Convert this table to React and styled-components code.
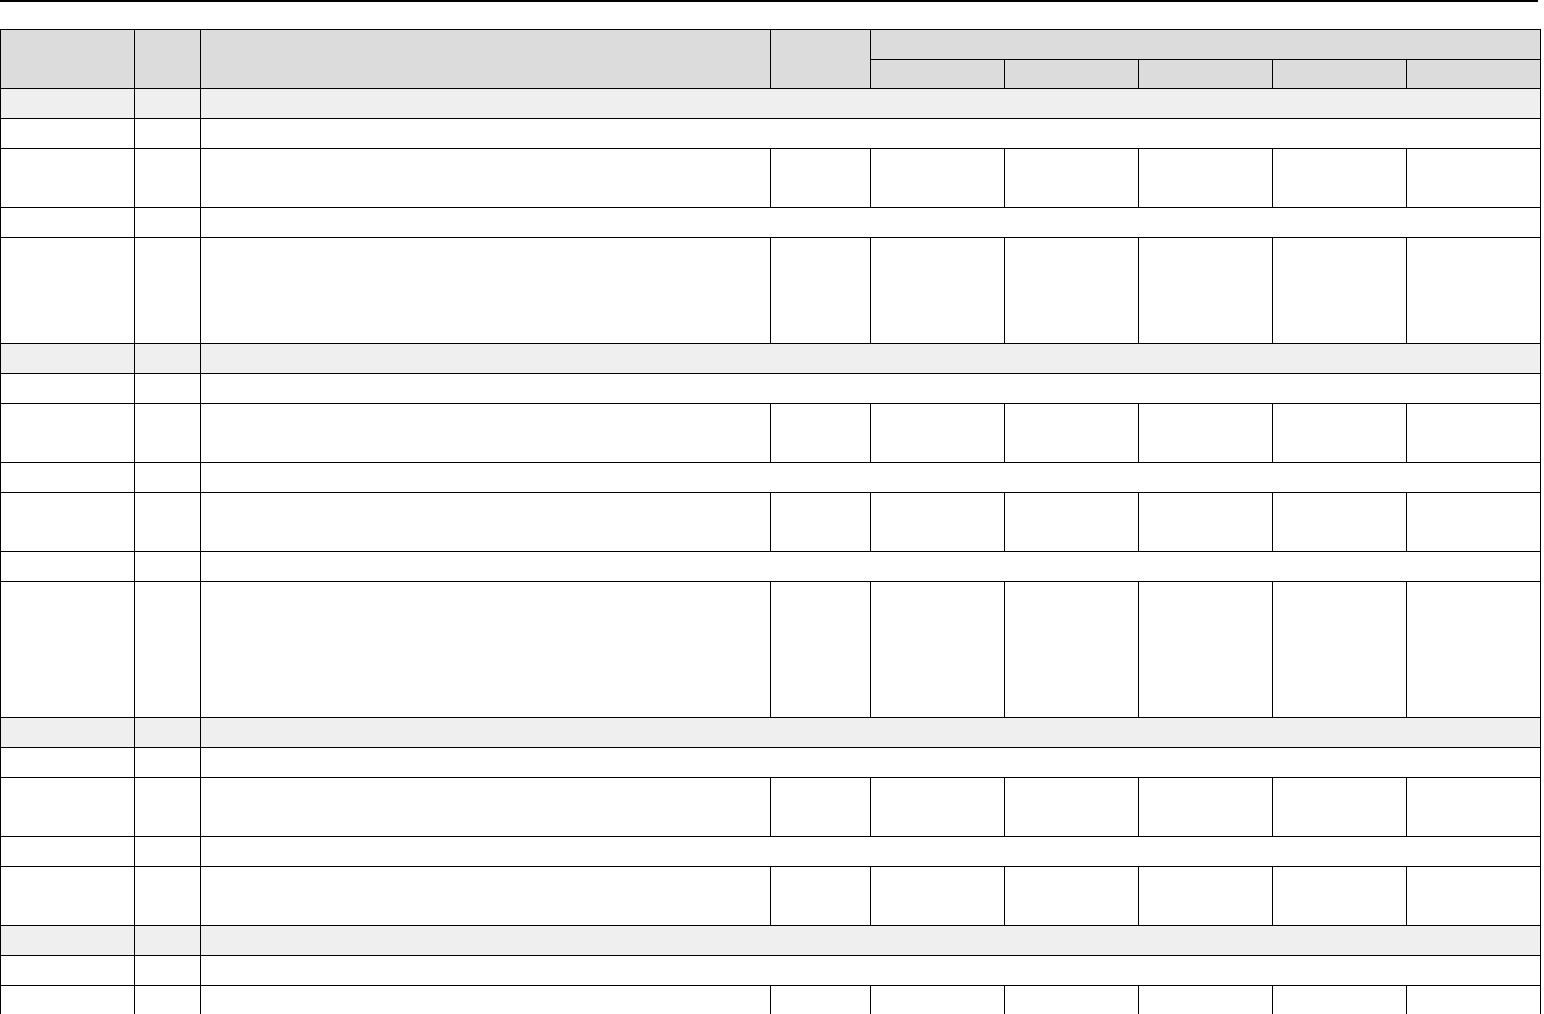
import styled, { createGlobalStyle } from "styled-components";

const GlobalStyle = createGlobalStyle`
  html, body {
    margin: 0;
    padding: 0;
    background: #ffffff;
    font-family: "Liberation Sans", Arial, sans-serif;
    font-size: 13px;
    color: #000;
  }
`;

const Page = styled.div`
  display: flex;
  flex-direction: column;
  width: 1544px;
`;

const TopRule = styled.div`
  width: 1538px;
  height: 0;
  border-top: 2px solid #000;
  margin-bottom: 27px;
`;

const Table = styled.table`
  border-collapse: collapse;
  table-layout: fixed;
  width: 1540px;
`;

const Row = styled.tr`
  height: ${(p) => p.$h}px;
  background: ${(p) =>
    p.$kind === "head" ? "#dcdcdc" : p.$kind === "section" ? "#efefef" : "#ffffff"};
`;

const Cell = styled.td`
  border: 1px solid #000;
  padding: 0 6px;
  vertical-align: middle;
`;

const HeadCell = styled.th`
  border: 1px solid #000;
  padding: 0 6px;
  font-weight: bold;
`;

const widths = [134, 66, 570, 100, 134, 134, 134, 134, 134];

const rows = [
  { kind: "section", h: 30 },
  { kind: "sub", h: 30 },
  { kind: "data", h: 59 },
  { kind: "sub", h: 30 },
  { kind: "data", h: 106 },
  { kind: "section", h: 30 },
  { kind: "sub", h: 30 },
  { kind: "data", h: 59 },
  { kind: "sub", h: 30 },
  { kind: "data", h: 59 },
  { kind: "sub", h: 30 },
  { kind: "data", h: 136 },
  { kind: "section", h: 30 },
  { kind: "sub", h: 30 },
  { kind: "data", h: 59 },
  { kind: "sub", h: 30 },
  { kind: "data", h: 59 },
  { kind: "section", h: 30 },
  { kind: "sub", h: 30 },
  { kind: "data", h: 29 },
];

function BodyRow({ kind, h }) {
  if (kind === "data") {
    return (
      <Row $kind={kind} $h={h}>
        {widths.map((_, i) => (
          <Cell key={i} />
        ))}
      </Row>
    );
  }
  return (
    <Row $kind={kind} $h={h}>
      <Cell />
      <Cell />
      <Cell colSpan={7} />
    </Row>
  );
}

export default function App() {
  return (
    <Page>
      <GlobalStyle />
      <TopRule />
      <Table>
        <colgroup>
          {widths.map((w, i) => (
            <col key={i} style={{ width: w }} />
          ))}
        </colgroup>
        <thead>
          <Row $kind="head" $h={30}>
            <HeadCell rowSpan={2} />
            <HeadCell rowSpan={2} />
            <HeadCell rowSpan={2} />
            <HeadCell rowSpan={2} />
            <HeadCell colSpan={5} />
          </Row>
          <Row $kind="head" $h={29}>
            <HeadCell />
            <HeadCell />
            <HeadCell />
            <HeadCell />
            <HeadCell />
          </Row>
        </thead>
        <tbody>
          {rows.map((r, i) => (
            <BodyRow key={i} {...r} />
          ))}
        </tbody>
      </Table>
    </Page>
  );
}
